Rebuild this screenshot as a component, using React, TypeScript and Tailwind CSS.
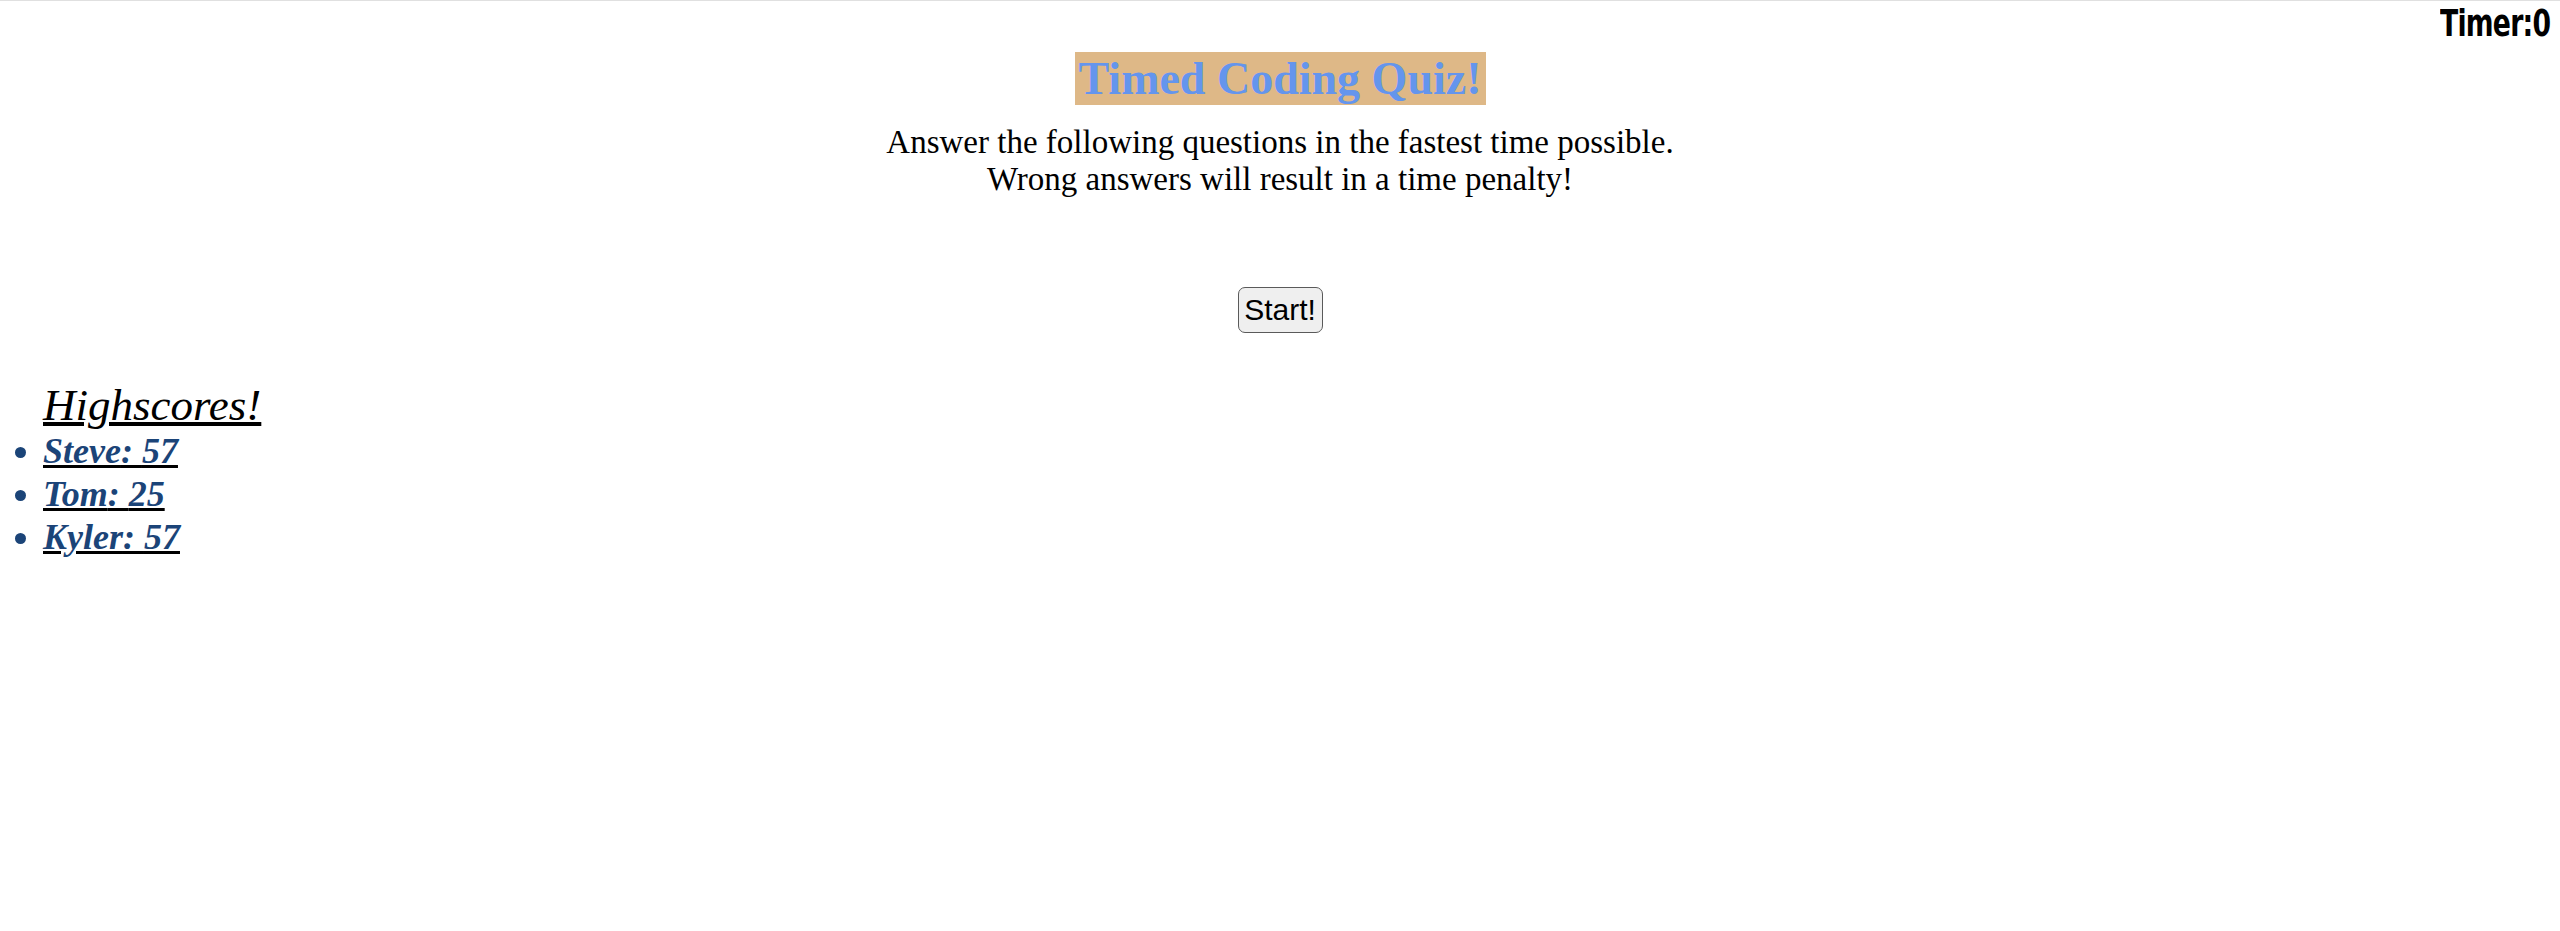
const scores = [
  { name: "Steve", score: 57 },
  { name: "Tom", score: 25 },
  { name: "Kyler", score: 57 },
];

const serif = "font-['Liberation_Serif','Times_New_Roman',serif]";

export default function App() {
  return (
    <div className="min-h-[931px] w-full border-t border-[#e0e0e0] bg-white text-black">
      {/* timer */}
      <header className="flex h-[44px] justify-end pr-[10px]">
        <span className="origin-right scale-x-[0.78] font-['Liberation_Sans_Narrow','DejaVu_Sans_Condensed',sans-serif] text-[38px] leading-[44px] font-bold tracking-[-1px]">
          Timer:0
        </span>
      </header>

      <main className={`${serif} flex flex-col items-center pt-[7px]`}>
        <h1 className="bg-[#deb887] px-[4px] text-[46px] leading-[53px] font-bold text-[#6495ed]">
          Timed Coding Quiz!
        </h1>
        <p className="mt-[19px] text-center text-[33px] leading-[37px]">
          Answer the following questions in the fastest time possible.
          <br />
          Wrong answers will result in a time penalty!
        </p>
        <button className="mt-[89px] h-[46px] w-[85px] rounded-[7px] border border-[#5a5a5a] bg-[#efefef] font-['Liberation_Sans',Arial,sans-serif] text-[30px] leading-none">
          Start!
        </button>
      </main>

      <section className={`${serif} mt-[48px] pl-[43px] italic`}>
        <h2 className="text-[45px] leading-[49px] underline decoration-black decoration-[4px]">
          Highscores!
        </h2>
        <ul className="list-disc text-[36px] leading-[43px] font-bold text-[#1b4478]">
          {scores.map((s) => (
            <li key={s.name} className="underline decoration-black decoration-[3px]">
              {s.name}: {s.score}
            </li>
          ))}
        </ul>
      </section>
    </div>
  );
}
